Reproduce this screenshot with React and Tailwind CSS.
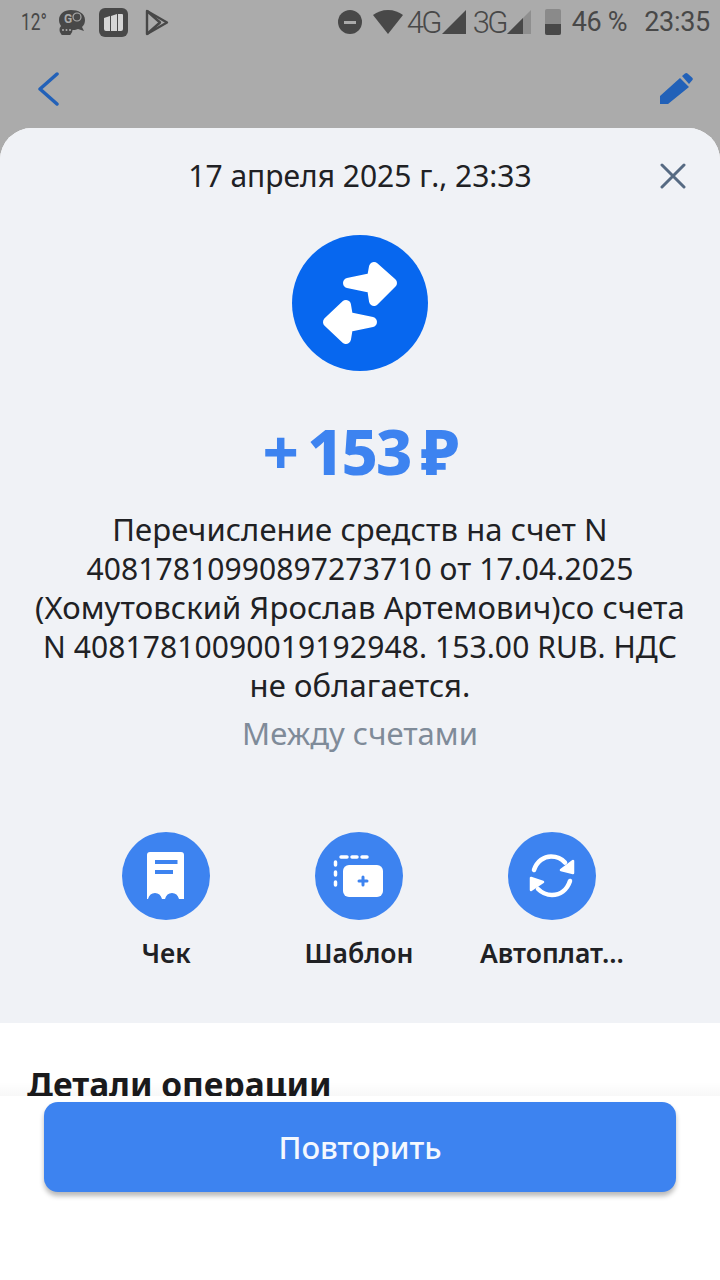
import React from 'react';

const ACTIONS = [
  { label: 'Чек', icon: ReceiptIcon },
  { label: 'Шаблон', icon: TemplateIcon },
  { label: 'Автоплат...', icon: RepeatIcon },
];

function ReceiptIcon() {
  return (
    <svg width="88" height="88" viewBox="0 0 88 88">
      <path
        fill="#fff"
        d="M28 20h31a3 3 0 0 1 3 3v44h-5c-1-4-3.500-6-7-6s-6 2-7 6h-3c-1-4-3.500-6-7-6s-6 2-7 6h-1V23a3 3 0 0 1 3-3z"
      />
      <rect x="33" y="28" width="22.500" height="4" fill="#3d83f0" />
      <rect x="33" y="38" width="18" height="4" fill="#3d83f0" />
    </svg>
  );
}

function TemplateIcon() {
  return (
    <svg width="88" height="88" viewBox="0 0 88 88">
      <rect x="28" y="33" width="40" height="32" rx="6" fill="#fff" />
      <path d="M48 45v8M44 49h8" stroke="#3d83f0" strokeWidth="3" strokeLinecap="round" />
      <g stroke="#fff" strokeWidth="3.500" strokeLinecap="round" fill="none">
        <path d="M26 25h6M37 25h5M47 25h5" />
        <path d="M20.500 30v3M20.500 40v3M20.500 50v3" />
      </g>
    </svg>
  );
}

function RepeatIcon() {
  return (
    <svg width="88" height="88" viewBox="0 0 88 88">
      <g stroke="#fff" strokeWidth="4.500" fill="none" strokeLinecap="round">
        <path d="M26 38c3-9 10-13.500 17-13.500 6 0 11 2.500 14 6" />
        <path d="M62 49c-3 9-10 14-18 14-6 0-10-2-14-6" />
      </g>
      <path d="M65 29v12L53 38z" fill="#fff" stroke="#fff" strokeWidth="2.500" strokeLinejoin="round" />
      <path d="M23 46v12l12-8z" fill="#fff" stroke="#fff" strokeWidth="2.500" strokeLinejoin="round" />
    </svg>
  );
}

function StatusBar() {
  return (
    <div className="flex h-[44px] items-center pl-[21px] pr-[10px] text-[#484848] font-['Roboto',sans-serif]">
      <span className="w-[20px] mr-[17px] origin-left scale-x-[0.72] text-[24px] leading-none whitespace-nowrap">12°</span>
      {/* messenger */}
      <svg width="28" height="26" viewBox="0 0 28 26" className="mr-[13px]">
        <path d="M13 1c7 0 14 3 14 10 0 3-1 5-3 7l2 4-6-2c-2 1-4 1-7 1-7 0-12-4-12-10S6 1 13 1z" fill="#484848" />
        <circle cx="8" cy="21" r="6.500" fill="#484848" />
        <circle cx="19" cy="8" r="4" fill="none" stroke="#ababab" strokeWidth="1.200" />
        <text x="6" y="14" fontSize="12" fontWeight="700" fill="#ababab" fontFamily="Roboto, sans-serif">G</text>
        <g fill="#ababab">
          <circle cx="5" cy="21" r="1" />
          <circle cx="8.500" cy="21" r="1" />
          <circle cx="12" cy="21" r="1" />
        </g>
      </svg>
      {/* wallet-like square */}
      <svg width="29" height="29" viewBox="0 0 29 29" className="mr-[17px]">
        <rect width="29" height="29" rx="6" fill="#484848" />
        <path d="M5 10l6-2v15H7a2 2 0 0 1-2-2zM12 8l6-2v17h-6zM19 6h4a1 1 0 0 1 1 1v14a2 2 0 0 1-2 2h-3z" fill="#d5d5d5" />
      </svg>
      {/* play store */}
      <svg width="24" height="27" viewBox="0 0 24 27" fill="none" stroke="#484848" strokeWidth="2.400" strokeLinejoin="round">
        <path d="M2 2l20 11.500L2 25z" />
        <path d="M2 2l13 11.500L2 25" />
      </svg>
      <span className="flex-1" />
      {/* dnd */}
      <span className="mr-[11px] flex h-[24px] w-[24px] items-center justify-center rounded-full bg-[#484848]">
        <span className="h-[3px] w-[12px] bg-[#ababab]" />
      </span>
      {/* wifi */}
      <svg width="30" height="24" viewBox="0 0 30 24" className="mr-[4px]">
        <path d="M0 5C4 2 9 0 15 0s11 2 15 5L15 24z" fill="#484848" />
      </svg>
      <span className="mr-[2px] w-[33px] text-[31px] leading-none tracking-[-2.500px] font-light">4G</span>
      <svg width="24" height="24" viewBox="0 0 24 24" className="mr-[7px]">
        <path d="M24 0v24H0z" fill="#484848" />
      </svg>
      <span className="mr-[2px] w-[32px] text-[31px] leading-none tracking-[-2.500px] font-light">3G</span>
      <svg width="24" height="24" viewBox="0 0 24 24" className="mr-[14px]">
        <path d="M24 0v24H0z" fill="#8f8f8f" />
        <path d="M16 8v16H0z" fill="#484848" />
      </svg>
      {/* battery */}
      <span className="relative mr-[11px] h-[26px] w-[16px] overflow-hidden rounded-[2px] bg-[#8a8a8a]">
        <span className="absolute inset-x-0 bottom-0 h-[11px] bg-[#484848]" />
      </span>
      <span className="mr-[17px] text-[27px] leading-none tracking-[-0.300px] whitespace-nowrap">46 %</span>
      <span className="text-[27px] leading-none tracking-[-0.300px]">23:35</span>
    </div>
  );
}

function TopBar() {
  return (
    <div className="flex h-[84px] items-center justify-between pt-[5px] pl-[38px] pr-[27px]">
      <svg width="22" height="34" viewBox="0 0 22 34" fill="none" stroke="#2261b8" strokeWidth="3.500" strokeLinecap="round" strokeLinejoin="round">
        <path d="M19 2L2 17l17 15" />
      </svg>
      <svg width="34" height="32" viewBox="0 0 34 32" fill="#2261b8">
        <path d="M1 23L21 5l9 9L9 31H1zM23 3l3-2.500a2 2 0 0 1 2.500 0l4.500 4a2 2 0 0 1 0 3L30 11z" />
      </svg>
    </div>
  );
}

function Action({ label, icon: Icon }) {
  return (
    <div className="flex w-[193px] flex-col items-center">
      <div className="flex h-[88px] w-[88px] items-center justify-center rounded-full bg-[#3d83f0]">
        <Icon />
      </div>
      <span className="mt-[17px] text-[26.500px] leading-[32px] font-semibold text-[#202124] whitespace-nowrap">{label}</span>
    </div>
  );
}

export default function App() {
  return (
    <div className="flex h-[1280px] w-[720px] flex-col overflow-hidden bg-[#ababab] font-['Noto_Sans',sans-serif]">
      <StatusBar />
      <TopBar />
      <div className="relative flex h-[968px] flex-col overflow-hidden rounded-t-[32px] bg-white">
        <div className="flex h-[895px] shrink-0 flex-col items-center bg-[#f0f2f6]">
          <div className="relative mt-[28px] flex h-[40px] w-full items-center justify-center">
            <span className="text-[30px] leading-[40px] text-[#202124]">17 апреля 2025 г., 23:33</span>
            <svg width="26" height="26" viewBox="0 0 26 26" className="absolute right-[34px] top-[7px]" fill="none" stroke="#566a82" strokeWidth="3" strokeLinecap="round">
              <path d="M2 2l22 22M24 2L2 24" />
            </svg>
          </div>
          <div className="mt-[39px] h-[136px] w-[136px] rounded-full bg-[#0767ef]">
            <svg width="136" height="136" viewBox="0 0 136 136" fill="#fff" stroke="#fff" strokeWidth="10" strokeLinejoin="round">
              <path d="M100 48L82 32l-2 11-24 5 24 5 2 13z" />
              <path d="M36 87l18-17 2 12 24 5-24 5-2 12z" />
            </svg>
          </div>
          <div className="mt-[43px] text-[63px] leading-[74px] font-extrabold tracking-[-2px] [word-spacing:-4px] text-[#3d83f0]">+ 153 ₽</div>
          <p className="mt-[22px] text-center text-[31px] leading-[39px] tracking-[0.100px] text-[#202124] whitespace-nowrap">
            <span className="block">Перечисление средств на счет N</span>
            <span className="block text-[30px]">40817810990897273710 от 17.04.2025</span>
            <span className="block">(Хомутовский Ярослав Артемович)со счета</span>
            <span className="block text-[30px]">N 40817810090019192948. 153.00 RUB. НДС</span>
            <span className="block">не облагается.</span>
          </p>
          <p className="mt-[8px] text-[31px] leading-[40px] text-[#7f8b99]">Между счетами</p>
          <div className="mt-[79px] -ml-[2px] flex">
            {ACTIONS.map((a) => (
              <Action key={a.label} {...a} />
            ))}
          </div>
        </div>
        <h2 className="ml-[27px] mt-[41px] text-[33.500px] leading-[40px] font-bold text-[#1a1a1c] whitespace-nowrap">Детали операции</h2>
        {/* shade above the button area */}
        <div className="absolute inset-x-0 bottom-0 h-[14px] bg-gradient-to-b from-black/0 to-black/[0.03]" />
      </div>
      <div className="flex-1 bg-white px-[44px] pt-[6px]">
        <button className="flex h-[90px] w-full items-center justify-center rounded-[14px] bg-[#3d83f0] text-[31px] font-medium text-[#f4f8fe] shadow-[0_4px_5px_rgba(0,0,0,0.28)]">
          Повторить
        </button>
      </div>
    </div>
  );
}
